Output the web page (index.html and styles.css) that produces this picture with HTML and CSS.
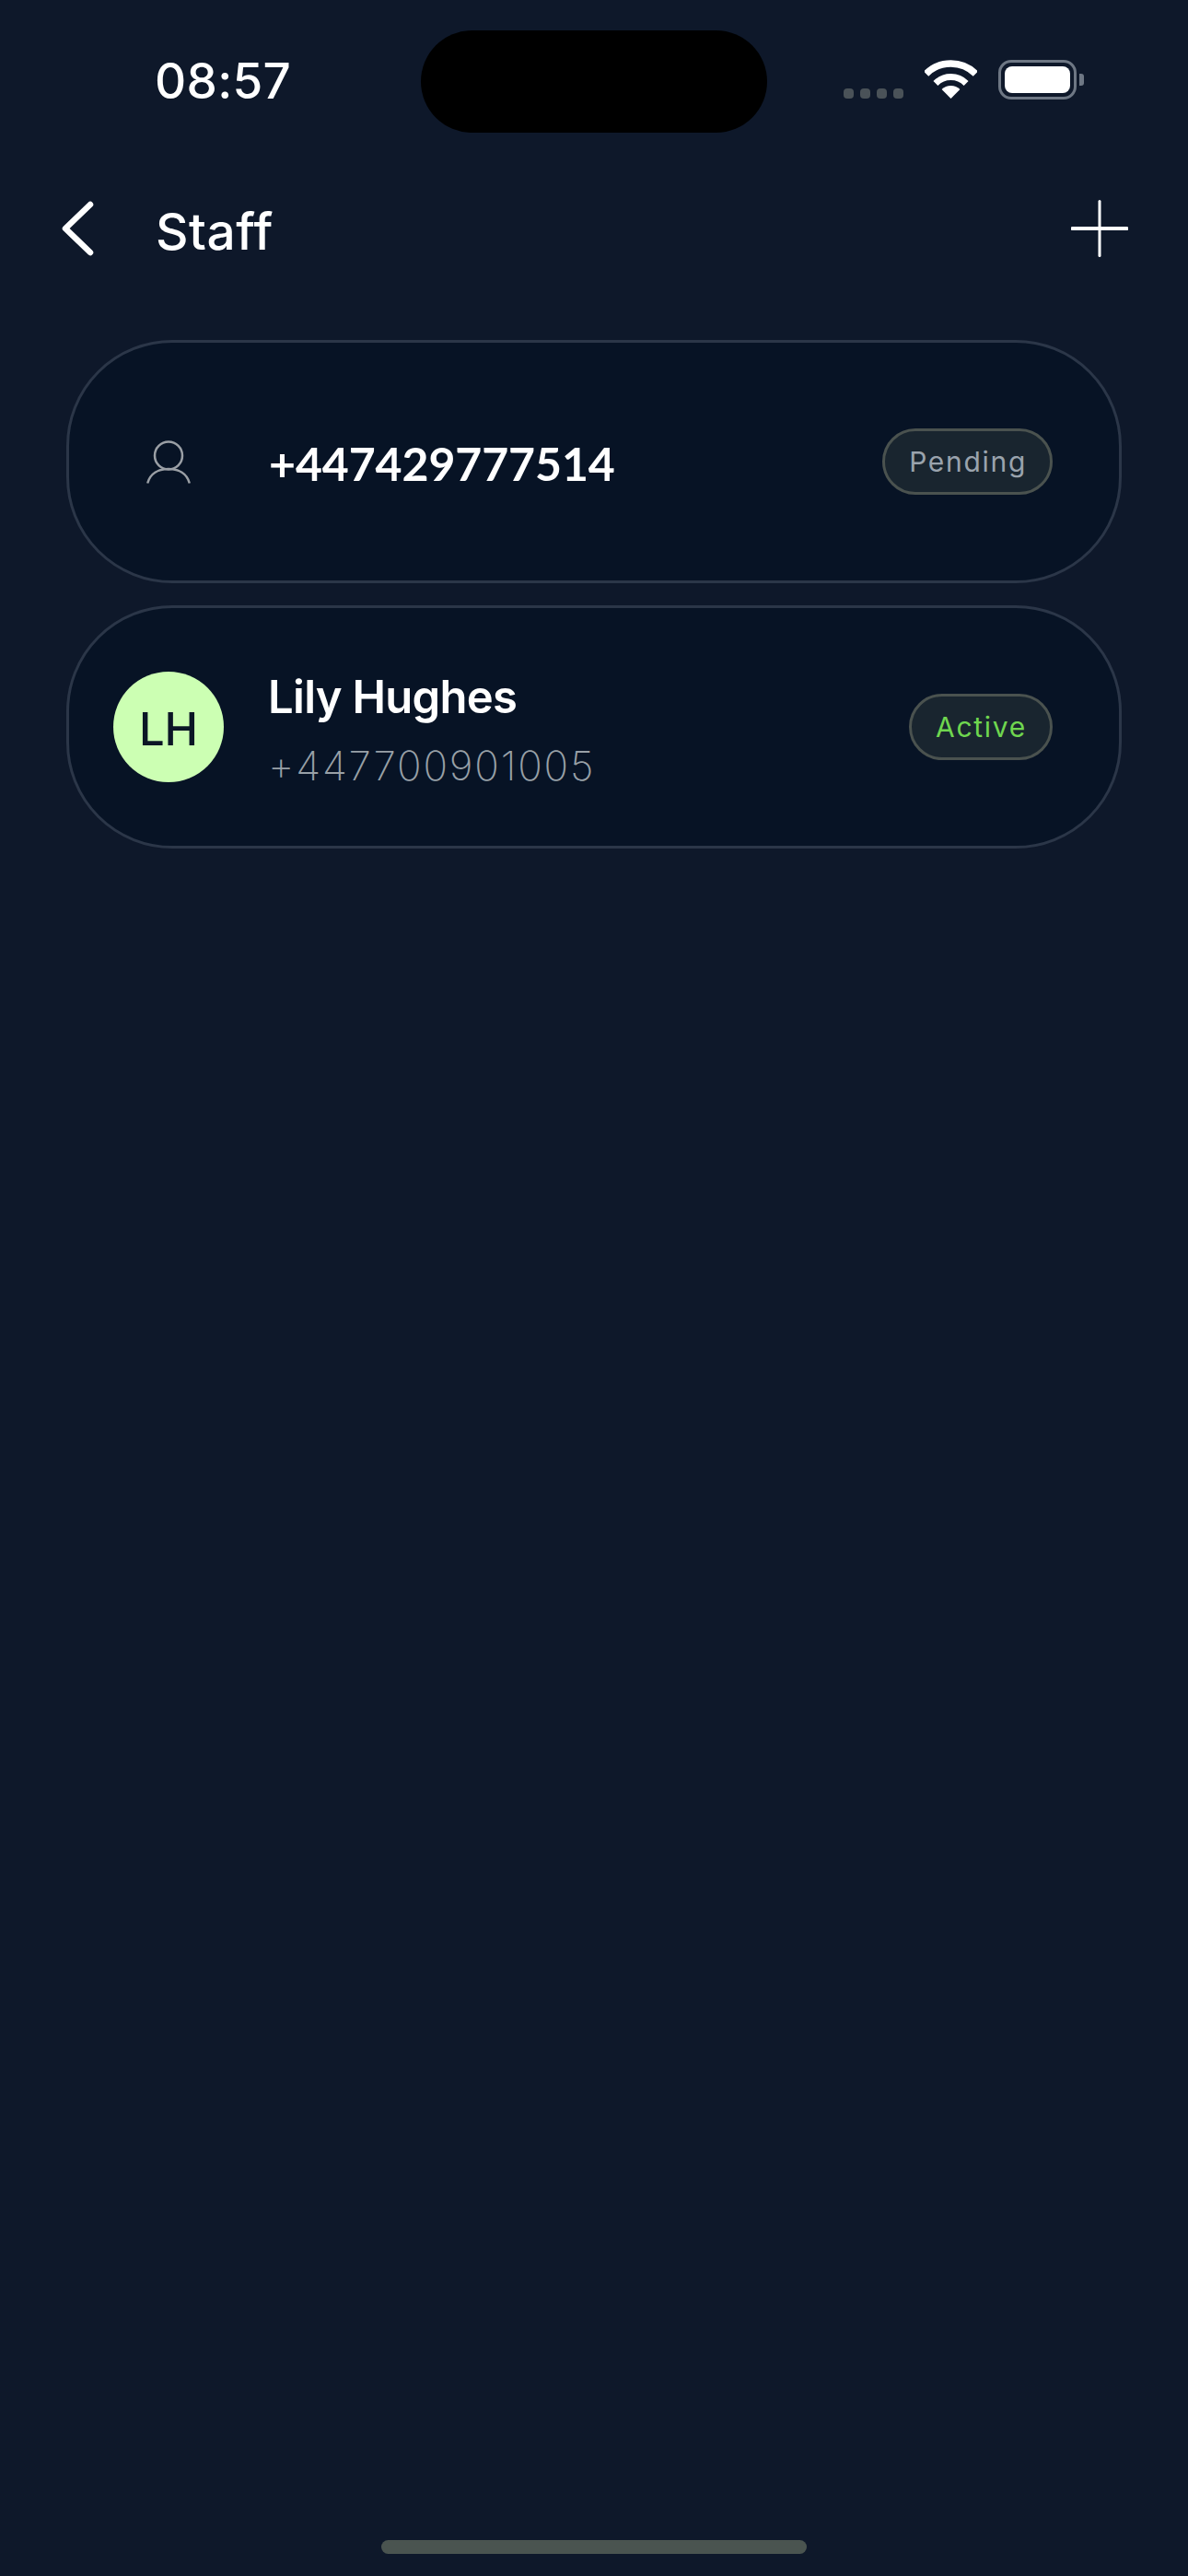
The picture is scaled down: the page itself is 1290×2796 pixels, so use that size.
FILE: index.html
```html
<!DOCTYPE html>
<html lang="en">
<head>
    <meta charset="UTF-8">
    <meta name="viewport" content="width=device-width, initial-scale=1.0">
    <title>Staff</title>
    <link rel="stylesheet" href="styles.css">
</head>
<body>
    <div class="status-bar">
        <div class="time">08:57</div>
        <div class="island"></div>
        <div class="status-icons">
            <div class="signal">
                <span class="signal-dot"></span>
                <span class="signal-dot"></span>
                <span class="signal-dot"></span>
                <span class="signal-dot"></span>
            </div>
            <svg class="wifi" width="57" height="42" viewBox="0 0 57 42">
                <path d="M1.6 15.1A38 38 0 0 1 55.4 15.1" fill="none" stroke="#fff" stroke-width="7.5"/>
                <path d="M11.9 25.4A23.5 23.5 0 0 1 45.1 25.4" fill="none" stroke="#fff" stroke-width="7"/>
                <path d="M28.5 42L18.6 32.1A14 14 0 0 1 38.4 32.1Z" fill="#fff"/>
            </svg>
            <div class="battery">
                <div class="battery-body"><div class="battery-fill"></div></div>
                <div class="battery-cap"></div>
            </div>
        </div>
    </div>

    <header class="topbar">
        <button class="icon-button back">
            <svg width="40" height="64" viewBox="0 0 40 64">
                <path d="M34 6L7 32L34 58" fill="none" stroke="#fff" stroke-width="6.500" stroke-linecap="round" stroke-linejoin="round"/>
            </svg>
        </button>
        <h1 class="title">Staff</h1>
        <button class="icon-button add">
            <svg width="62" height="62" viewBox="0 0 62 62">
                <path d="M1.5 31H60.5" stroke="#fff" stroke-width="4" stroke-linecap="round"/>
                <path d="M31 1.5V60.5" stroke="#fff" stroke-width="3" stroke-linecap="round"/>
            </svg>
        </button>
    </header>

    <main class="staff-list">
        <div class="staff-card">
            <div class="avatar-slot">
                <svg width="48" height="47" viewBox="0 0 48 47">
                    <ellipse cx="24" cy="16.500" rx="15" ry="15" fill="none" stroke="#9a9fa5" stroke-width="2.500"/>
                    <path d="M1.200 46.500C4 36 13 31 24 31S44 36 46.800 46.500" fill="none" stroke="#9a9fa5" stroke-width="2.500"/>
                </svg>
            </div>
            <div class="staff-info">
                <div class="staff-phone-main">+447429777514</div>
            </div>
            <span class="badge badge-pending">Pending</span>
        </div>
        <div class="staff-card">
            <div class="avatar-slot">
                <div class="avatar">LH</div>
            </div>
            <div class="staff-info staff-info-two-line">
                <div class="staff-name">Lily Hughes</div>
                <div class="staff-phone">+447700901005</div>
            </div>
            <span class="badge badge-active">Active</span>
        </div>
    </main>

    <div class="home-bar"></div>
</body>
</html>
```

FILE: styles.css
```css
* {
    box-sizing: border-box;
}
body {
    margin: 0;
    height: 2796px;
    display: flex;
    flex-direction: column;
    background-color: #0e182a;
    color: #fff;
    font-family: "Inter", "Noto Sans", sans-serif;
    overflow: hidden;
}
.status-bar {
    display: grid;
    grid-template-columns: 457px 376px 1fr;
    padding-top: 33px;
    height: 144px;
}
.time {
    padding: 30px 0 0 168px;
    font-size: 53px;
    font-weight: 500;
    line-height: 50px;
    letter-spacing: 0.3px;
}
.island {
    height: 111px;
    background: #000;
    border-radius: 56px;
}
.status-icons {
    display: flex;
    align-items: flex-start;
    padding: 32px 0 0 83px;
}
.signal {
    display: flex;
    gap: 7px;
    margin-top: 31px;
}
.signal-dot {
    width: 11px;
    height: 11px;
    background: #4a5258;
    border-radius: 4px;
}
.wifi {
    margin-left: 23px;
}
.battery {
    display: flex;
    align-items: center;
    margin-left: 23px;
}
.battery-body {
    width: 85px;
    height: 43px;
    padding: 4px;
    border: 3px solid #6e7784;
    border-radius: 14px;
}
.battery-fill {
    height: 100%;
    background: #fff;
    border-radius: 8px;
}
.battery-cap {
    width: 5px;
    height: 13px;
    margin-left: 3px;
    background: #6e7784;
    border-radius: 0 3px 3px 0;
}
.topbar {
    display: flex;
    align-items: center;
    height: 64px;
    margin-top: 72px;
    padding: 0 65px 0 64px;
}
.icon-button {
    padding: 0;
    border: none;
    background: none;
    display: flex;
}
.title {
    margin: 6px 0 0 65px;
    font-size: 55px;
    font-weight: 500;
    letter-spacing: 0.5px;
    flex: 1;
}
.staff-list {
    display: flex;
    flex-direction: column;
    gap: 24px;
    margin: 89px 72px 0;
}
.staff-card {
    display: flex;
    align-items: center;
    height: 264px;
    padding-right: 72px;
    background: #071325;
    border: 3px solid #2b3648;
    border-radius: 115px;
}
.avatar-slot {
    display: flex;
    justify-content: center;
    width: 120px;
    margin-left: 48px;
    flex-shrink: 0;
}
.avatar {
    display: flex;
    align-items: center;
    justify-content: center;
    width: 120px;
    height: 120px;
    padding-top: 4px;
    background: #ccffb3;
    border-radius: 50%;
    color: #0b1626;
    font-size: 49px;
    font-weight: 500;
}
.staff-info {
    margin-left: 48px;
    flex: 1;
}
.staff-info-two-line {
    padding-top: 6px;
}
.staff-phone-main {
    padding: 3px 0 0 1px;
    font-family: "Lato", sans-serif;
    font-size: 50px;
    font-weight: 700;
    letter-spacing: -0.1px;
}
.staff-name {
    font-size: 49px;
    font-weight: 600;
    letter-spacing: -0.7px;
    line-height: 60px;
    margin-bottom: 18px;
}
.staff-phone {
    font-size: 44px;
    font-weight: 200;
    line-height: 52px;
    letter-spacing: 1.8px;
    color: #98a0a7;
}
.badge {
    height: 72px;
    padding: 0 25px 0 26px;
    display: flex;
    align-items: center;
    background: #19252f;
    border: 3px solid #4a524f;
    border-radius: 36px;
    font-size: 30px;
    font-weight: 400;
    letter-spacing: 1.700px;
}
.badge-pending {
    color: #9aa3ad;
}
.badge-active {
    color: #6fd64f;
}
.home-bar {
    width: 462px;
    height: 15px;
    margin: auto auto 24px;
    background: #4a5450;
    border-radius: 8px;
}
```
